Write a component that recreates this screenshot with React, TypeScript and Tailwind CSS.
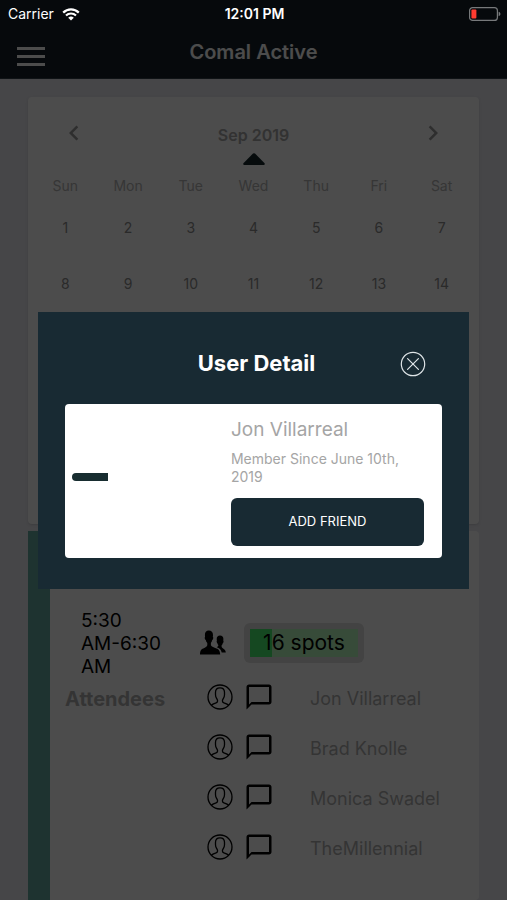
import {
  MdChatBubbleOutline,
  MdChevronLeft,
  MdChevronRight,
} from "react-icons/md";

const weekdays = ["Sun", "Mon", "Tue", "Wed", "Thu", "Fri", "Sat"];

const weeks = [
  [1, 2, 3, 4, 5, 6, 7],
  [8, 9, 10, 11, 12, 13, 14],
];

const attendees = [
  "Jon Villarreal",
  "Brad Knolle",
  "Monica Swadel",
  "TheMillennial",
];

function WifiIcon() {
  return (
    <svg width="18" height="13" viewBox="0 0 18 13" fill="none" aria-hidden="true">
      <path d="M1.2 4.6a11 11 0 0 1 15.6 0" stroke="white" strokeWidth="2.2" />
      <path d="M4 7.6a7 7 0 0 1 10 0" stroke="white" strokeWidth="2.1" />
      <path d="M9 12.6 6.2 9.8a4 4 0 0 1 5.6 0z" fill="white" />
    </svg>
  );
}

function BatteryIcon() {
  return (
    <svg width="32" height="14" viewBox="0 0 32 14" fill="none" aria-hidden="true">
      <rect x="0.6" y="0.6" width="27.8" height="12.8" rx="3" stroke="#77797b" strokeWidth="1.2" />
      <rect x="2.4" y="2.4" width="5" height="9.2" rx="1" fill="#ff3b30" />
      <path d="M29.6 4.8c1.3.4 1.8 1.2 1.8 2.2s-.5 1.8-1.8 2.2z" fill="#77797b" />
    </svg>
  );
}

function CloseIcon() {
  return (
    <svg width="26" height="26" viewBox="0 0 26 26" fill="none" stroke="#dfe5e8" strokeWidth="1.2" aria-hidden="true">
      <circle cx="13" cy="13" r="11.7" />
      <path d="m7.600 7.600 10.800 10.800M18.400 7.600 7.600 18.400" strokeLinecap="round" />
    </svg>
  );
}

function PeopleIcon() {
  return (
    <svg width="26" height="25" viewBox="0 0 26 25" fill="black" aria-hidden="true">
      <path d="M8.8.6c2.6 0 4.2 1.6 4.2 4.3 0 .9-.1 1.300-.2 2 .6.2.6 1.300.2 2.200-.2.6-.5.9-.8 1-.2 1.400-.8 2.200-1.300 2.800v2.400c.6 1.600 3.200 2.300 5.500 3.100 2.500.9 3.600 2.200 3.800 6.200H0c.1-4 .9-5.300 3.300-6.200 2.200-.8 3.500-1.500 4-3.100v-2.400c-.7-.6-1.300-1.400-1.500-2.800-.4-.1-.6-.5-.8-1-.4-.9-.4-2 .1-2.200-.1-.7-.2-1.100-.2-2C4.900 2.200 6.200.6 8.800.6z" />
      <path d="M20 5.600c2.200 0 3.400 1.300 3.400 3.500 0 .7-.1 1-.2 1.500.6.2.4 1.600-.1 2.300-.3.300-.4.400-.5.500-.2 1-.5 1.400-1 1.900v1.500c.4 1.100 1.300 1.500 2.200 2.100 1.300.9 1.900 1.900 2 3.700h-4.100c-.6-3.200-2.400-4.200-5-5.300.8-.4 1.400-.8 1.600-1.500v-.8c-.4-.5-.6-.9-.8-1.600-.6-.2-1-1.600-.8-2.300l.2-.5c-.1-.4-.2-.9-.2-1.500 0-2.200 1.200-3.500 3.300-3.500z" />
    </svg>
  );
}

function ContactIcon() {
  return (
    <svg width="26" height="26" viewBox="0 0 26 26" fill="none" stroke="black" strokeWidth="1.3" aria-hidden="true">
      <circle cx="13" cy="13" r="12" />
      <path d="M4.400 21.300c1.200-1.300 2.600-1.700 4.200-2.200 1.300-.4 2-1 2-2.100 0-1.300-.7-1.900-1.200-3-.5-1-.9-1.700-.9-3.300V8.300c0-2.800 1.700-4.500 4.500-4.500s4.500 1.700 4.500 4.500v2.400c0 1.600-.4 2.300-.9 3.300-.5 1.100-1.200 1.700-1.200 3 0 1.100.7 1.700 2 2.100 1.600.5 3 .9 4.200 2.200" />
    </svg>
  );
}

function Header() {
  return (
    <header className="border-b border-[#33414a] bg-[#14212b]">
      {/* Status bar stays above the dimmed layer */}
      <div className="relative z-20 grid h-7 grid-cols-3 items-center pl-2 pr-[6px] text-white">
        <div className="flex items-center gap-2 text-sm">
          Carrier
          <WifiIcon />
        </div>
        <p className="text-center text-sm font-semibold">12:01 PM</p>
        <div className="flex justify-end">
          <BatteryIcon />
        </div>
      </div>

      <div className="grid h-[50px] grid-cols-[56px_1fr_56px] items-center pb-[2px]">
        <button type="button" aria-label="Open menu" className="flex flex-col gap-[5px] pl-[17px] pt-2">
          <span className="h-[3px] w-7 bg-white" />
          <span className="h-[3px] w-7 bg-white" />
          <span className="h-[3px] w-7 bg-white" />
        </button>
        <h1 className="text-center text-xl font-semibold text-white">Comal Active</h1>
      </div>
    </header>
  );
}

function Calendar() {
  return (
    <section className="min-h-[427px] rounded-sm bg-white px-[6px] pt-4 shadow-sm">
      <div className="flex h-10 items-center justify-between px-5">
        <button type="button" aria-label="Previous month" className="flex size-10 items-center justify-center text-[#999]">
          <MdChevronLeft size={30} />
        </button>
        <h2 className="pt-1 text-base font-semibold text-[#a8a8a8]">Sep 2019</h2>
        <button type="button" aria-label="Next month" className="flex size-10 items-center justify-center text-[#999]">
          <MdChevronRight size={30} />
        </button>
      </div>

      <svg className="mx-auto" width="22" height="12" viewBox="0 0 22 12" aria-hidden="true">
        <path d="M10 .6q1-.8 2 0l9.600 9.600q.6 1.400-.8 1.800H1.200Q-.2 11.600.4 10.200z" fill="#14272b" />
      </svg>

      <table className="mt-[7px] w-full table-fixed text-center">
        <thead>
          <tr className="h-7 text-sm text-[#b4b4b4]">
            {weekdays.map((day) => (
              <th key={day} className="p-0 font-normal">
                {day}
              </th>
            ))}
          </tr>
        </thead>
        <tbody>
          {weeks.map((week) => (
            <tr key={week[0]} className="h-14 text-sm text-[#8c8c8c]">
              {week.map((day) => (
                <td key={day} className="p-0">
                  {day}
                </td>
              ))}
            </tr>
          ))}
        </tbody>
      </table>
    </section>
  );
}

function ClassSlot() {
  return (
    <section className="mt-[7px] flex-1 rounded-r-sm border-l-[22px] border-[#64aaa0] bg-white pr-4 pt-[76px]">
      <div className="flex items-center">
        <p className="ml-[31px] w-[100px] pt-[2px] text-[19px] leading-[23px]">
          5:30 <span className="whitespace-nowrap">AM-6:30</span> AM
        </p>
        <div className="ml-[19px]">
          <PeopleIcon />
        </div>
        <div className="ml-[18px] w-[120px] rounded-md bg-[#e0e0e0] p-[6px]">
          <div className="flex h-7 items-center justify-center bg-linear-to-r from-[#48f070] from-20% to-[#b8fabe] to-20% text-[21px]">
            16 spots
          </div>
        </div>
      </div>

      <div className="-mt-[6px] flex pl-[15px]">
        <h3 className="w-[142px] shrink-0 pt-[13px] text-xl leading-7 font-bold text-[#b0b0b0]">Attendees</h3>
        <ul className="min-w-0 flex-1">
          {attendees.map((name) => (
            <li key={name} className="flex h-[50px] items-center">
              <button type="button" aria-label={`View ${name}`}>
                <ContactIcon />
              </button>
              <button type="button" aria-label={`Message ${name}`} className="ml-[11px]">
                <MdChatBubbleOutline size={30} />
              </button>
              <span className="ml-9 pt-1 text-lg leading-7 text-[#b0b0b0]">{name}</span>
            </li>
          ))}
        </ul>
      </div>
    </section>
  );
}

function UserDetailModal() {
  return (
    <div className="absolute inset-0 z-10 flex items-center justify-center bg-black/70">
      <div
        role="dialog"
        aria-modal="true"
        aria-labelledby="user-detail-title"
        className="w-[85%] bg-[#182a33] px-[27px] pb-[31px]"
      >
        <div className="grid h-[92px] grid-cols-[64px_1fr_58px] items-center pt-3">
          <h2 id="user-detail-title" className="col-start-2 text-center text-[22px] font-bold text-white">
            User Detail
          </h2>
          <button type="button" aria-label="Close" className="flex justify-center">
            <CloseIcon />
          </button>
        </div>

        <div className="flex rounded-sm bg-white pl-[7px] pr-[18px] pt-3 pb-3">
          <div className="flex flex-1 items-center pb-2">
            <span className="h-2 w-9 rounded-l-full bg-[#182d30]" />
          </div>
          <div className="w-[193px]">
            <p className="text-[19px] leading-7 text-[#a5a5a5]">Jon Villarreal</p>
            <p className="mt-[6px] text-sm leading-[18px] text-[#a5a5a5]">
              Member Since June 10th, 2019
            </p>
            <button
              type="button"
              className="mt-3 h-12 w-full rounded-md bg-[#182a33] text-[13px] text-white"
            >
              ADD FRIEND
            </button>
          </div>
        </div>
      </div>
    </div>
  );
}

export default function App() {
  return (
    <div className="relative flex min-h-screen flex-col bg-[#e9e9f0] font-[Inter,Roboto,sans-serif] text-black">
      <Header />
      <main className="flex flex-1 flex-col px-7 pt-[18px]">
        <Calendar />
        <ClassSlot />
      </main>
      <UserDetailModal />
    </div>
  );
}
